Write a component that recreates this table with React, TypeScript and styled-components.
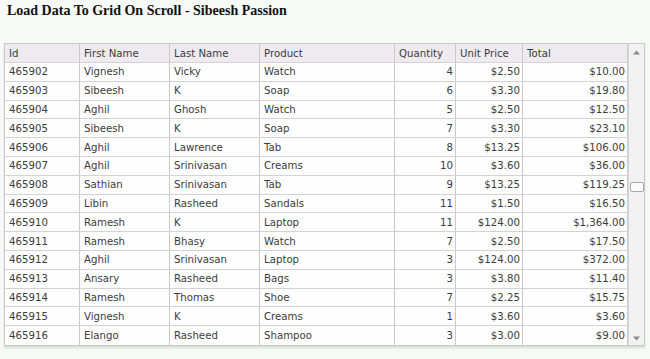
import React from "react";
import styled, { createGlobalStyle } from "styled-components";

const Global = createGlobalStyle`
  html, body { margin: 0; padding: 0; background: #f6f9f5; }
  body { width: 650px; height: 359px; overflow: hidden; }
`;

const Page = styled.div`
  padding: 4px 5px 0 4px;
  display: flex;
  flex-direction: column;
`;

const Title = styled.h3`
  margin: 0 0 0 3px;
  height: 39px;
  font-family: "Liberation Serif", "Times New Roman", serif;
  font-weight: bold;
  font-size: 14px;
  line-height: 14px;
  color: #111;
`;

const Grid = styled.div`
  display: flex;
  width: 641px;
  box-sizing: border-box;
  border: 1px solid #c9c9c9;
  background: #fcfdfc;
  box-shadow: 0 2px 2px rgba(0, 0, 0, 0.12);
`;

const Body = styled.div`
  width: 623px;
  display: flex;
  flex-direction: column;
`;

const COLS = "75px 90px 90px 135px 61px 67px 105px";

const Row = styled.div<{ $head?: boolean }>`
  display: grid;
  grid-template-columns: ${COLS};
  height: ${(p) => (p.$head ? "19px" : "18.8px")};
  background: ${(p) => (p.$head ? "#eeeaef" : "#fdfefd")};
  box-sizing: border-box;
  border-bottom: 1px solid #d3d3d3;
  &:last-child { border-bottom: none; }
`;

const Cell = styled.div<{ $right?: boolean }>`
  box-sizing: border-box;
  border-right: 1px solid #c9c9c9;
  padding: ${(p) => (p.$right ? "0 2px 0 4px" : "0 4px 0 4px")};
  font-family: "DejaVu Sans", Verdana, sans-serif;
  font-size: 10.2px;
  color: #3c3c3c;
  display: flex;
  align-items: center;
  justify-content: ${(p) => (p.$right ? "flex-end" : "flex-start")};
  white-space: nowrap;
  overflow: hidden;
`;

const Scroll = styled.div`
  width: 16px;
  border-left: 1px solid #d8d8d8;
  background: #f1f1f1;
  display: flex;
  flex-direction: column;
  align-items: center;
  justify-content: space-between;
  padding: 6px 0 4px;
  box-sizing: border-box;
  position: relative;
`;

const Arrow = styled.svg`
  width: 7px;
  height: 5px;
  display: block;
`;

const Thumb = styled.div`
  position: absolute;
  left: 1px;
  top: 138px;
  width: 12px;
  height: 8px;
  border: 1px solid #a9a9a9;
  border-radius: 2px;
  background: #fafafa;
`;

type R = [string, string, string, string, number, string, string];
const rows: R[] = [
  ["465902", "Vignesh", "Vicky", "Watch", 4, "$2.50", "$10.00"],
  ["465903", "Sibeesh", "K", "Soap", 6, "$3.30", "$19.80"],
  ["465904", "Aghil", "Ghosh", "Watch", 5, "$2.50", "$12.50"],
  ["465905", "Sibeesh", "K", "Soap", 7, "$3.30", "$23.10"],
  ["465906", "Aghil", "Lawrence", "Tab", 8, "$13.25", "$106.00"],
  ["465907", "Aghil", "Srinivasan", "Creams", 10, "$3.60", "$36.00"],
  ["465908", "Sathian", "Srinivasan", "Tab", 9, "$13.25", "$119.25"],
  ["465909", "Libin", "Rasheed", "Sandals", 11, "$1.50", "$16.50"],
  ["465910", "Ramesh", "K", "Laptop", 11, "$124.00", "$1,364.00"],
  ["465911", "Ramesh", "Bhasy", "Watch", 7, "$2.50", "$17.50"],
  ["465912", "Aghil", "Srinivasan", "Laptop", 3, "$124.00", "$372.00"],
  ["465913", "Ansary", "Rasheed", "Bags", 3, "$3.80", "$11.40"],
  ["465914", "Ramesh", "Thomas", "Shoe", 7, "$2.25", "$15.75"],
  ["465915", "Vignesh", "K", "Creams", 1, "$3.60", "$3.60"],
  ["465916", "Elango", "Rasheed", "Shampoo", 3, "$3.00", "$9.00"],
];

const heads = ["Id", "First Name", "Last Name", "Product", "Quantity", "Unit Price", "Total"];

export default function App() {
  return (
    <>
      <Global />
      <Page>
        <Title>Load Data To Grid On Scroll - Sibeesh Passion</Title>
        <Grid>
          <Body>
            <Row $head>
              {heads.map((h) => (
                <Cell key={h}>{h}</Cell>
              ))}
            </Row>
            {rows.map((r) => (
              <Row key={r[0]}>
                <Cell>{r[0]}</Cell>
                <Cell>{r[1]}</Cell>
                <Cell>{r[2]}</Cell>
                <Cell>{r[3]}</Cell>
                <Cell $right>{r[4]}</Cell>
                <Cell $right>{r[5]}</Cell>
                <Cell $right>{r[6]}</Cell>
              </Row>
            ))}
          </Body>
          <Scroll>
            <Arrow viewBox="0 0 7 5">
              <path d="M0 4.5 L3.5 0.5 L7 4.5 Z" fill="#8a8a8a" />
            </Arrow>
            <Thumb />
            <Arrow viewBox="0 0 7 5">
              <path d="M0 0.5 L3.5 4.5 L7 0.5 Z" fill="#8a8a8a" />
            </Arrow>
          </Scroll>
        </Grid>
      </Page>
    </>
  );
}
